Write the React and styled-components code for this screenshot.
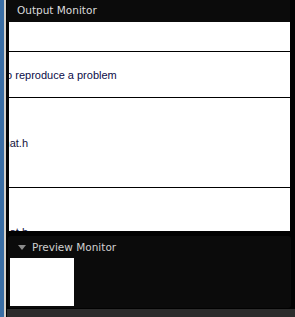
import styled, { createGlobalStyle } from 'styled-components';

const Global = createGlobalStyle`
  html, body { margin: 0; padding: 0; background: #000; }
  body { width: 295px; height: 317px; overflow: hidden; }
`;

// the list is scrolled sideways, so each row's text starts cut off at the left
const rows = [
  { id: 1, height: 30, text: '', shift: 0 },
  { id: 2, height: 46, text: 'to reproduce a problem', color: '#0c0c48', shift: -6 },
  { id: 3, height: 90, text: 'Format.h', color: '#14143c', shift: -25 },
  { id: 4, height: 88, text: 'Format.h', color: '#14143c', shift: -25 },
];

function App() {
  return (
    <>
      <Global />
      <Screen>
        <BlueEdge />
        <GreyEdge />
        <Main>
          <Dock>
            <DockTitle>Output Monitor</DockTitle>
            <List>
              {rows.map((r) => (
                <Row key={r.id} $h={r.height}>
                  <RowText $color={r.color} $shift={r.shift}>
                    {r.text}
                  </RowText>
                </Row>
              ))}
            </List>
          </Dock>
          <Preview>
            <PreviewTitle>
              <Arrow />
              Preview Monitor
            </PreviewTitle>
            <Thumb />
          </Preview>
          <StatusBar />
        </Main>
      </Screen>
    </>
  );
}

export default App;

const Screen = styled.div`
  display: flex;
  width: 295px;
  height: 317px;
  background: #000;
`;

const BlueEdge = styled.div`
  width: 4px;
  background: #3a6ea5;
`;

const GreyEdge = styled.div`
  width: 2px;
  background: #d4d0c8;
`;

const Main = styled.div`
  flex: 1;
  display: flex;
  flex-direction: column;
  padding-left: 1px;
  background: #020202;
  min-width: 0;
`;

const Dock = styled.div`
  display: flex;
  flex-direction: column;
  height: 231px;
  padding-right: 5px;
  background: #020202;
`;

const DockTitle = styled.div`
  height: 22px;
  flex-shrink: 0;
  padding-left: 10px;
  background: #0b0b0b;
  color: #dcdcdc;
  font-family: 'DejaVu Sans', sans-serif;
  font-size: 10.5px;
  line-height: 21px;
`;

const List = styled.div`
  flex: 1;
  margin-left: 2px;
  background: #fff;
  overflow: hidden;
`;

const Row = styled.div`
  height: ${(p) => p.$h}px;
  box-sizing: border-box;
  border-bottom: 1px solid #000;
  display: flex;
  align-items: center;
  overflow: hidden;
`;

const RowText = styled.span`
  margin-left: ${(p) => p.$shift}px;
  white-space: nowrap;
  color: ${(p) => p.$color || '#000'};
  font-family: 'Liberation Sans', Arial, sans-serif;
  font-size: 11px;
`;

const Preview = styled.div`
  margin: 5px 4px 0 1px;
  height: 72px;
  border-radius: 3px;
  background: #0b0b0b;
  display: flex;
  flex-direction: column;
`;

const PreviewTitle = styled.div`
  height: 22px;
  display: flex;
  align-items: center;
  gap: 6px;
  padding-left: 10px;
  color: #d0d0d0;
  font-family: 'DejaVu Sans', sans-serif;
  font-size: 10.5px;
`;

const Arrow = styled.span`
  width: 0;
  height: 0;
  border-left: 4px solid transparent;
  border-right: 4px solid transparent;
  border-top: 5px solid #8a8a8a;
`;

const Thumb = styled.div`
  width: 64px;
  height: 48px;
  margin-left: 2px;
  background: #fff;
`;

const StatusBar = styled.div`
  margin-top: auto;
  height: 8px;
  background: #2c2c2c;
`;
